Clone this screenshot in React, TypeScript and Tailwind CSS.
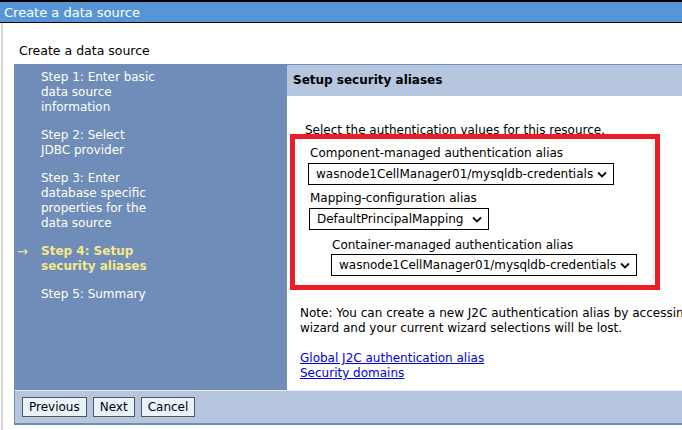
import React from 'react';

const STEPS: { lines: string[]; current?: boolean }[] = [
  { lines: ['Step 1: Enter basic', 'data source', 'information'] },
  { lines: ['Step 2: Select', 'JDBC provider'] },
  { lines: ['Step 3: Enter', 'database specific', 'properties for the', 'data source'] },
  { lines: ['Step 4: Setup', 'security aliases'], current: true },
  { lines: ['Step 5: Summary'] },
];

function FakeSelect({ value, className = '' }: { value: string; className?: string }) {
  return (
    <div className={`flex items-center justify-between h-[22px] border border-black bg-white pl-[7px] pr-[6px] ${className}`}>
      <span className="whitespace-nowrap">{value}</span>
      <svg width="10" height="7" viewBox="0 0 10 7" className="shrink-0">
        <path d="M1 1.5 L5 5.5 L9 1.5" fill="none" stroke="#111" strokeWidth="1.8" />
      </svg>
    </div>
  );
}

export default function App() {
  return (
    <div className="relative w-[682px] h-[430px] overflow-hidden bg-white font-['DejaVu_Sans',sans-serif] text-[12px] leading-[15px] text-black">
      {/* Title bar */}
      <div className="h-[23px] bg-[#5696d6] border-t-2 border-b border-black text-white text-[13px] pl-[4px] flex items-center">
        Create a data source
      </div>

      <div className="border-l-2 border-[#d4d4d4] ml-[1px] h-[407px] flex flex-col">
        <div className="h-[41px] pl-[16px] pt-[20px] text-[12.5px]">Create a data source</div>

        <div className="ml-[11px] flex h-[326px]">
          {/* Steps */}
          <div className="w-[273px] shrink-0 bg-[#6f8db8] pt-[6px] flex flex-col gap-[13px]">
            {STEPS.map((s, i) => (
              <div key={i} className="flex">
                <div className="w-[27px] pl-[3px] text-[#f4e98a] text-[13px]">{s.current ? '→' : ''}</div>
                <div className={s.current ? 'font-bold text-[#f4e98a]' : 'text-white'}>
                  {s.lines.map(l => (
                    <div key={l} className="whitespace-nowrap">{l}</div>
                  ))}
                </div>
              </div>
            ))}
          </div>

          {/* Content */}
          <div className="flex-1 min-w-0 flex flex-col border-t border-[#7090c0]">
            <div className="h-[31px] bg-[#b5c6de] pl-[6px] flex items-center font-bold">Setup security aliases</div>
            <div className="flex-1 pl-[13px] pt-[27px] overflow-hidden">
              <div className="pl-[5px] whitespace-nowrap">Select the authentication values for this resource.</div>
              <div className="pt-[8px]">
                <div className="pl-[10px]">Component-managed authentication alias</div>
                <FakeSelect value="wasnode1CellManager01/mysqldb-credentials" className="ml-[8px] mt-[2px] w-[306px]" />
                <div className="pl-[10px] mt-[6px]">Mapping-configuration alias</div>
                <FakeSelect value="DefaultPrincipalMapping" className="ml-[9px] mt-[2px] w-[180px]" />
                <div className="pl-[32px] mt-[8px]">Container-managed authentication alias</div>
                <FakeSelect value="wasnode1CellManager01/mysqldb-credentials" className="ml-[31px] mt-[1px] w-[306px]" />
              </div>
              <div className="mt-[30px] whitespace-nowrap">
                Note: You can create a new J2C authentication alias by accessing one of the
              </div>
              <div className="whitespace-nowrap">wizard and your current wizard selections will be lost.</div>
              <div className="mt-[15px] flex flex-col items-start">
                <a className="text-[#0000ee] underline">Global J2C authentication alias</a>
                <a className="text-[#0000ee] underline">Security domains</a>
              </div>
            </div>
          </div>
        </div>

        {/* Buttons */}
        <div className="ml-[11px] h-[35px] bg-[#b5c6de] border-t border-[#e6edf7] border-l border-l-[#6f8db8] border-b-2 border-b-[#6a8cc0] flex items-center pl-[7px] gap-[6px]">
          {['Previous', 'Next', 'Cancel'].map(b => (
            <button key={b} className="h-[20px] px-[6px] bg-[#eaf2fc] border border-[#555] text-[12px] leading-none">
              {b}
            </button>
          ))}
        </div>
      </div>

      {/* Annotation box */}
      <div className="absolute left-[290px] top-[134px] w-[370px] h-[156px] border-[5px] border-[#ee1c25]" />
    </div>
  );
}
